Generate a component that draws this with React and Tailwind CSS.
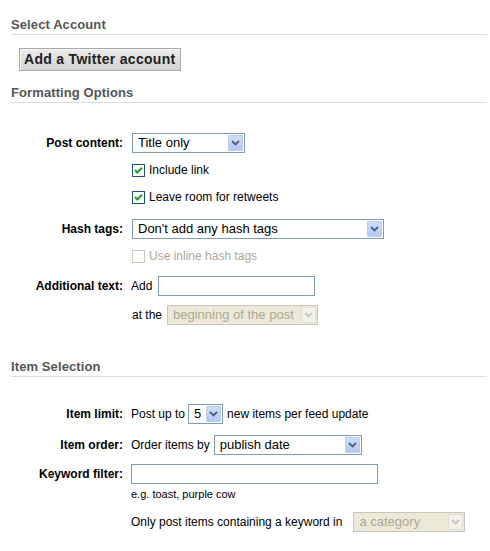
import React from "react";

function Chevron({ disabled }) {
  return (
    <svg width="9" height="6" viewBox="0 0 9 6">
      <path
        d="M1 1 L4.5 4.5 L8 1"
        fill="none"
        stroke={disabled ? "#c9c7ba" : "#4d6185"}
        strokeWidth="1.8"
      />
    </svg>
  );
}

function Select({ className, value, disabled }) {
  return (
    <div
      className={`h-[20px] border flex items-center ${
        disabled
          ? "bg-[#ece9d8] border-[#c9c7ba] text-[#aca899]"
          : "bg-white border-[#7f9db9] text-black"
      } ${className}`}
    >
      <span className="flex-1 pl-[5px] text-[13px] leading-[18px] whitespace-nowrap overflow-hidden">
        {value}
      </span>
      <span
        className={`w-[15px] h-[16px] mr-[1px] flex items-center justify-center rounded-[1px] border ${
          disabled
            ? "bg-[#f3f2ec] border-[#e2e0d6]"
            : "bg-gradient-to-b from-[#cfdcfb] to-[#b4c7f6] border-[#bccbf1]"
        }`}
      >
        <Chevron disabled={disabled} />
      </span>
    </div>
  );
}

function Checkbox({ checked, disabled }) {
  return (
    <span
      className={`w-[13px] h-[13px] border bg-white flex items-center justify-center shrink-0 ${
        disabled ? "border-[#cac8bb]" : "border-[#1c5180]"
      }`}
    >
      {checked && (
        <svg width="11" height="11" viewBox="0 0 11 11">
          <path
            d="M2 5 L4.3 7.5 L9 2.8"
            fill="none"
            stroke="#21a121"
            strokeWidth="2"
          />
        </svg>
      )}
    </span>
  );
}

function Heading({ children, className }) {
  return (
    <div
      className={`ml-[11px] mr-[3px] pb-[1px] border-b border-[#dcdcdc] text-[13px] leading-[16px] font-bold tracking-[0.1px] text-[#555555] ${className}`}
    >
      {children}
    </div>
  );
}

function Row({ label, className, children }) {
  return (
    <div className={`flex items-center h-[20px] ${className}`}>
      <div className="w-[123px] shrink-0 text-right text-[12px] font-bold text-black whitespace-nowrap">
        {label}
      </div>
      <div className="ml-[8px] flex items-center text-[12px] text-black whitespace-nowrap">
        {children}
      </div>
    </div>
  );
}

export default function App() {
  return (
    <div
      className="w-[490px] h-[551px] bg-white overflow-hidden"
      style={{ fontFamily: '"Liberation Sans", Arial, sans-serif' }}
    >
      <Heading className="pt-[17px]">Select Account</Heading>

      <div className="mt-[13px] ml-[19px] flex">
        <div className="h-[23px] px-[4px] flex items-center border border-[#a9a9a9] bg-gradient-to-b from-[#ececec] to-[#d2d2d2] text-[14px] tracking-[0.3px] font-bold text-[#222222] whitespace-nowrap shadow-[inset_1px_1px_0_#f8f8f8]">
          Add a Twitter account
        </div>
      </div>

      <Heading className="mt-[14px]">Formatting Options</Heading>

      <Row label="Post content:" className="mt-[30px]">
        <Select className="w-[113px] ml-[1px]" value="Title only" />
      </Row>
      <Row className="mt-[7px]">
        <span className="ml-[1px] flex items-center">
          <Checkbox checked />
          <span className="ml-[4px]">Include link</span>
        </span>
      </Row>
      <Row className="mt-[7px]">
        <span className="ml-[1px] flex items-center">
          <Checkbox checked />
          <span className="ml-[4px]">Leave room for retweets</span>
        </span>
      </Row>
      <Row label="Hash tags:" className="mt-[12px]">
        <Select className="w-[252px] ml-[1px]" value="Don't add any hash tags" />
      </Row>
      <Row className="mt-[7px]">
        <span className="ml-[1px] flex items-center">
          <Checkbox disabled />
          <span className="ml-[4px] text-[#aca899]">Use inline hash tags</span>
        </span>
      </Row>
      <Row label="Additional text:" className="mt-[10px]">
        <span>Add</span>
        <div className="ml-[6px] w-[157px] h-[20px] border border-[#7f9db9] bg-white" />
      </Row>
      <Row className="mt-[9px]">
        <span className="ml-[1px]">at the</span>
        <Select
          className="w-[151px] ml-[5px]"
          value="beginning of the post"
          disabled
        />
      </Row>

      <Heading className="mt-[34px]">Item Selection</Heading>

      <Row label="Item limit:" className="mt-[27px]">
        <span>Post up to</span>
        <Select className="w-[35px] ml-[3px]" value="5" />
        <span className="ml-[4px]">new items per feed update</span>
      </Row>
      <Row label="Item order:" className="mt-[11px]">
        <span>Order items by</span>
        <Select className="w-[148px] ml-[4px]" value="publish date" />
      </Row>
      <Row label="Keyword filter:" className="mt-[9px]">
        <div className="w-[247px] h-[20px] border border-[#7f9db9] bg-white" />
      </Row>
      <div className="mt-[3px] ml-[131px] h-[14px] text-[11px] leading-[14px] text-black">
        e.g. toast, purple cow
      </div>
      <Row className="mt-[11px]">
        <span>Only post items containing a keyword in</span>
        <Select className="w-[112px] ml-[11px]" value="a category" disabled />
      </Row>
    </div>
  );
}
